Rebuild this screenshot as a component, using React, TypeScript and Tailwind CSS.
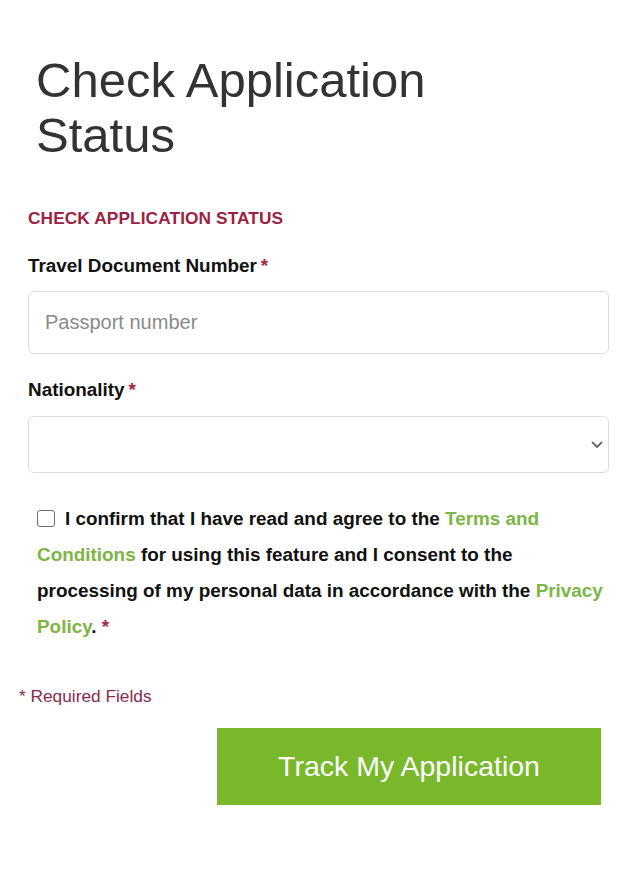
import { useState } from "react"

export default function App() {
  const [agreed, setAgreed] = useState(false)

  return (
    <div className="min-h-screen bg-white pl-[28px] pr-[23px] pt-[53px] font-['Liberation_Sans',Arial,sans-serif]">
      <h1 className="ml-[8px] text-[49px] leading-[55px] font-normal text-[#333333]">
        Check Application
        <br />
        Status
      </h1>

      <form className="flex flex-col">
        <h2 className="mt-[45px] text-[17.3px] leading-[20px] font-bold uppercase tracking-[0.1px] text-[#9b2242]">
          Check Application Status
        </h2>

        {/* Travel document */}
        <label className="mt-[26px] text-[18.9px] leading-[24px] font-bold text-[#111111]">
          Travel Document Number
          <span className="ml-[4px] text-[#a8263e]">*</span>
        </label>
        <input
          type="text"
          placeholder="Passport number"
          className="mt-[13px] h-[63px] w-full rounded-[6px] border border-[#dddddd] px-[16px] text-[20px] text-[#333333] placeholder:text-[#8a8a8a] outline-none"
        />

        {/* Nationality */}
        <label className="mt-[24px] text-[18.9px] leading-[24px] font-bold text-[#111111]">
          Nationality
          <span className="ml-[4px] text-[#a8263e]">*</span>
        </label>
        <div className="relative mt-[14px]">
          <select className="h-[57px] w-full appearance-none rounded-[6px] border border-[#dddddd] bg-white px-[16px] text-[18px] outline-none">
            <option value=""></option>
          </select>
          <svg
            className="pointer-events-none absolute right-[6px] top-[25px]"
            width="12"
            height="8"
            viewBox="0 0 12 8"
            fill="none"
          >
            <path d="M1.5 1.5L6 6L10.5 1.5" stroke="#666666" strokeWidth="1.8" strokeLinecap="round" strokeLinejoin="round" />
          </svg>
        </div>

        {/* Consent */}
        <p className="mt-[28px] pl-[9px] text-[18.9px] leading-[36px] font-bold text-[#111111]">
          <input
            type="checkbox"
            checked={agreed}
            onChange={(e) => setAgreed(e.target.checked)}
            className="relative top-[2px] mr-[10px] inline-block h-[17px] w-[18px] appearance-none rounded-[3px] border border-[#6f6f6f] bg-white align-baseline checked:bg-[#79b82b]"
          />
          I confirm that I have read and agree to the{" "}
          <a href="#" className="text-[#7db544]">Terms and Conditions</a> for using this feature
          and I consent to the processing of my personal data in accordance with the{" "}
          <a href="#" className="text-[#7db544]">Privacy Policy</a>.{" "}
          <span className="text-[#a8263e]">*</span>
        </p>

        <p className="-ml-[9px] mt-[41px] text-[17.3px] leading-[20px] text-[#8a2a4c]">* Required Fields</p>

        <div className="mt-[22px] flex justify-end pr-[8px]">
          <button
            type="button"
            className="h-[77px] w-[384px] bg-[#79b82b] text-[28.5px] font-normal text-white"
          >
            Track My Application
          </button>
        </div>
      </form>
    </div>
  )
}
